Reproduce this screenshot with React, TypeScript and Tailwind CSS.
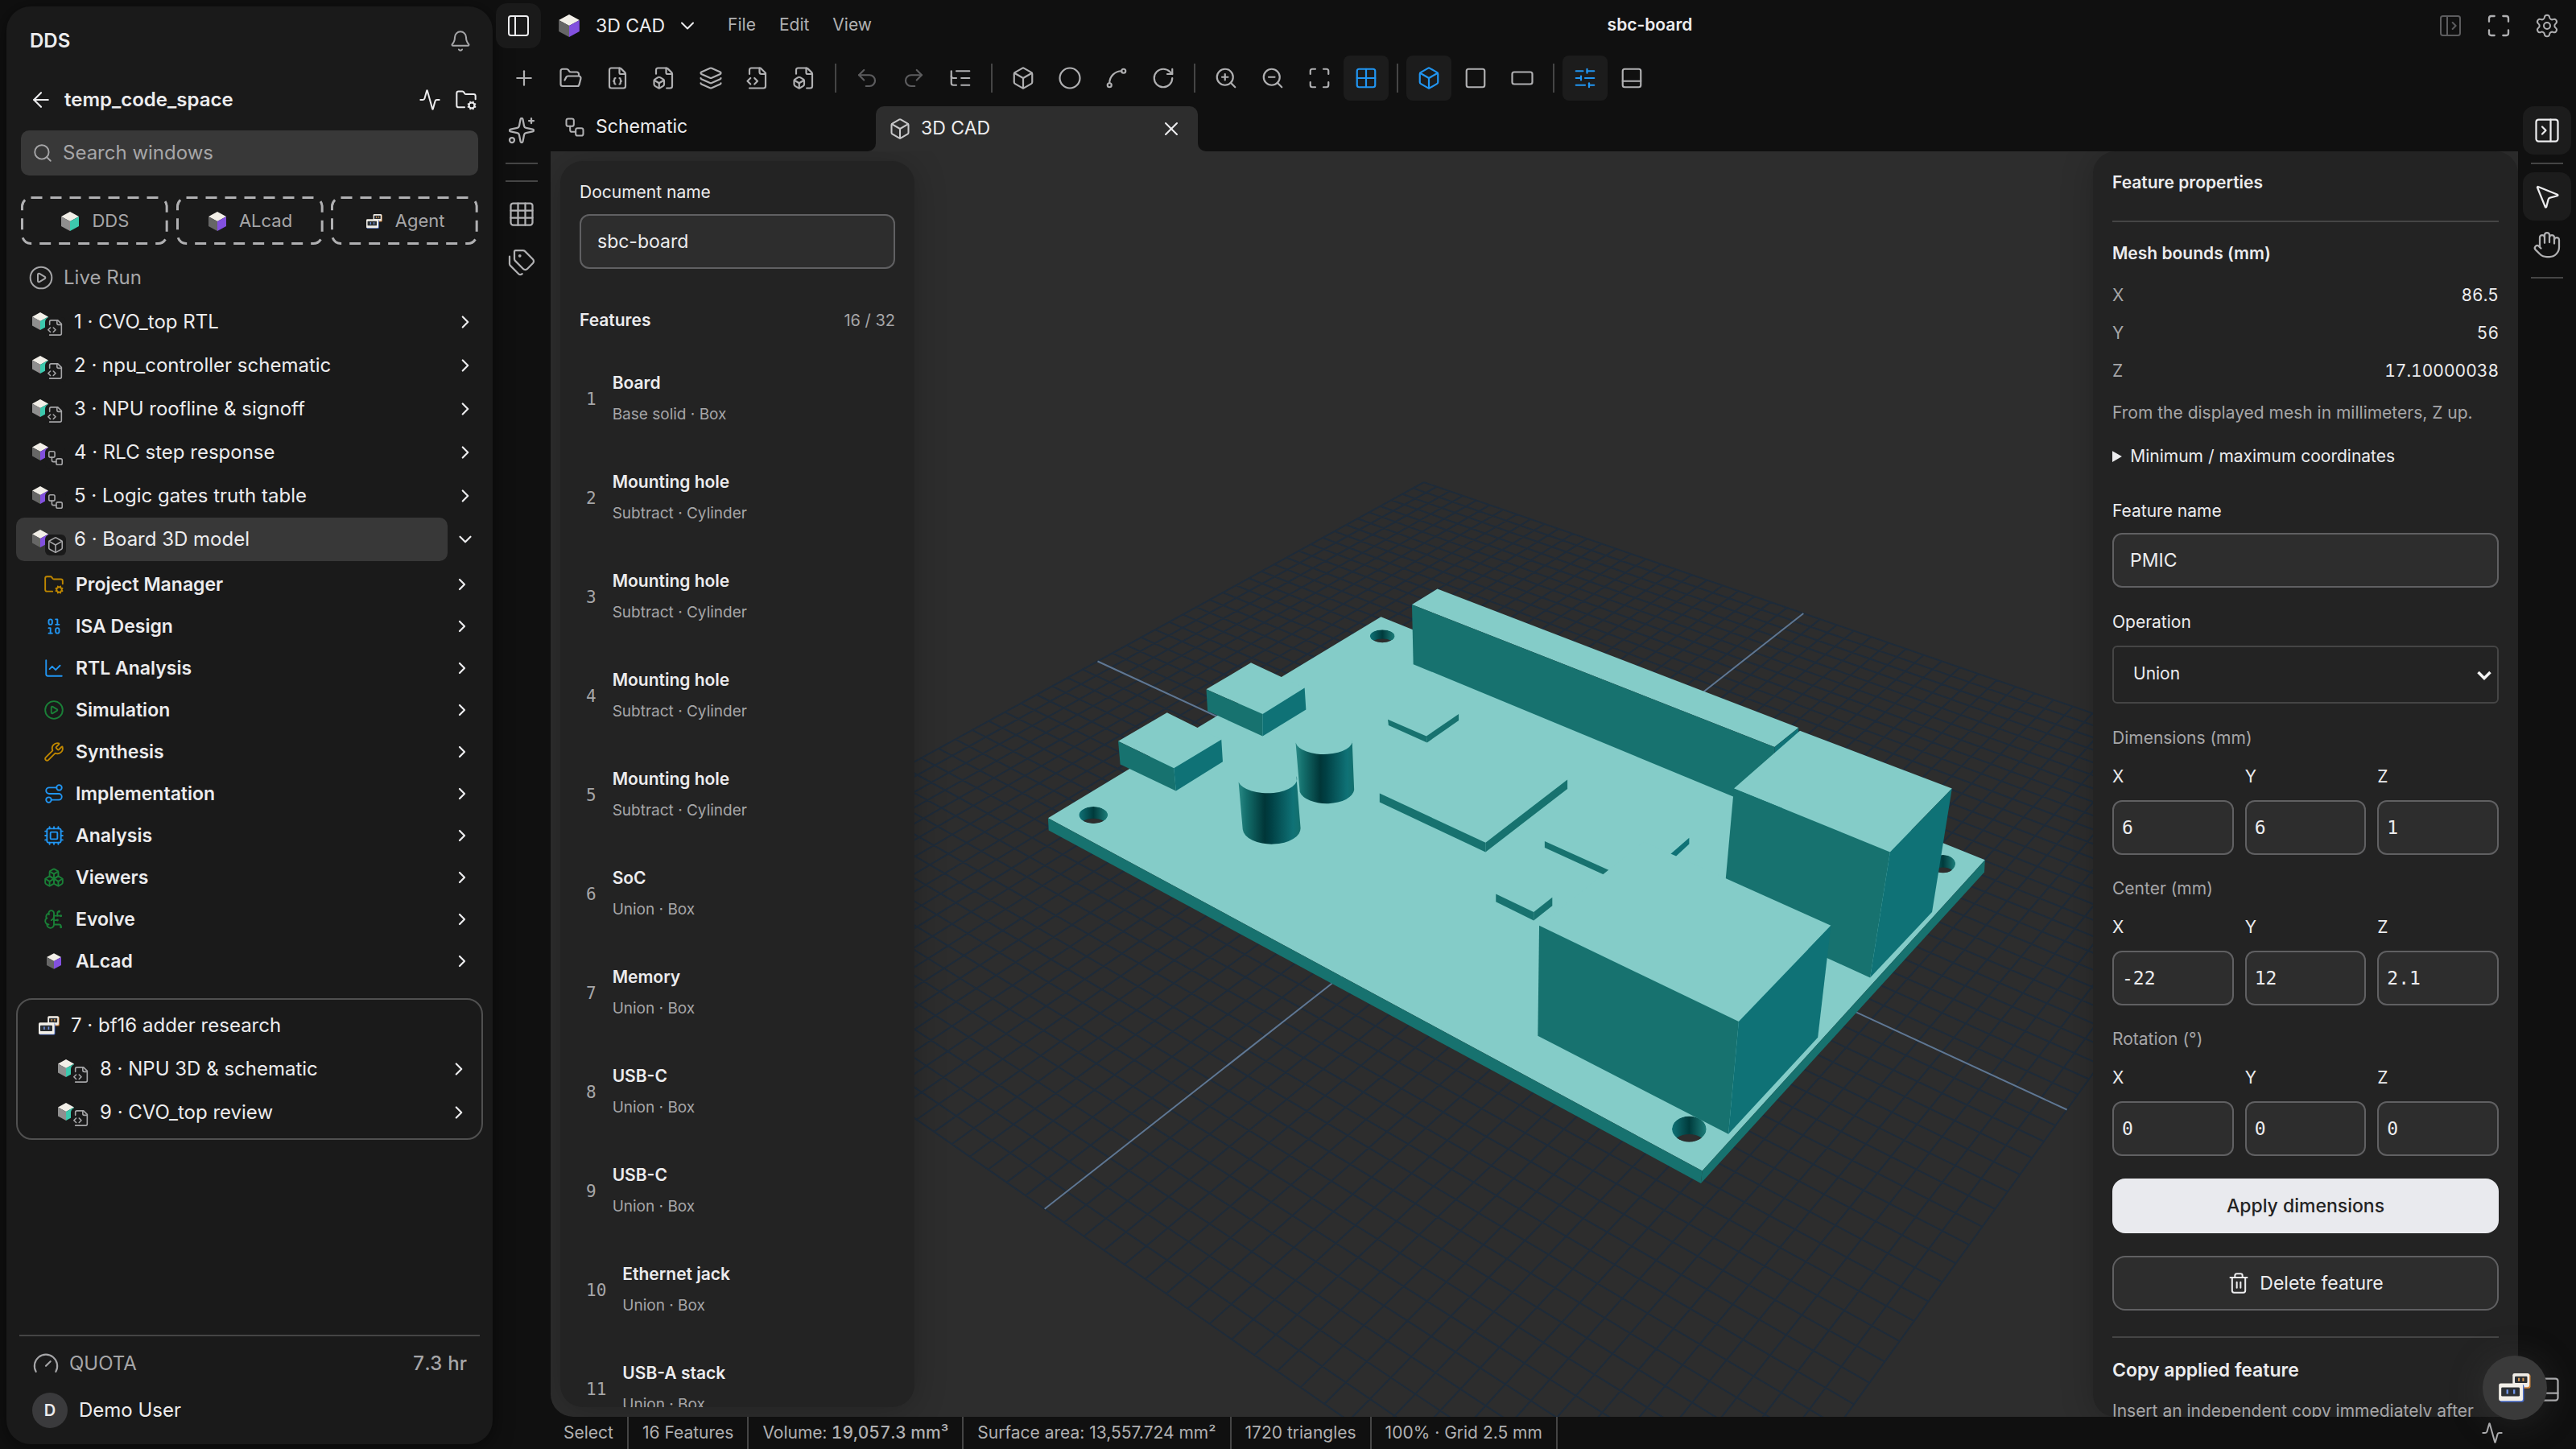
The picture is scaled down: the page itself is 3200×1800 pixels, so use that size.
import React from "react";
import {
  Activity, ArrowLeft, Bell, Binary, Box, Boxes, BrainCircuit, ChartLine, ChevronDown, ChevronRight,
  Circle, CirclePlay, Cpu, FileBox, FileJson, FolderCog, FolderOpen, Gauge, Grid2x2, Grid3x3,
  Hand, Layers, ListTree, Maximize, MousePointer2, PanelBottom, PanelLeft, PanelLeftOpen, PanelRightClose,
  Plus, RectangleHorizontal, Redo2, RotateCw, Route, Search, Settings, SlidersHorizontal, Sparkles, Spline,
  Square, Tags, Trash2, Undo2, Workflow, Wrench, X, ZoomIn, ZoomOut,
} from "lucide-react";

type IconType = React.ComponentType<{ size?: number; strokeWidth?: number; className?: string }>;

function CodeFile({ size = 24, strokeWidth = 2, className }: { size?: number; strokeWidth?: number; className?: string }) {
  return (
    <svg width={size} height={size} viewBox="0 0 24 24" fill="none" stroke="currentColor" strokeWidth={strokeWidth}
      strokeLinecap="round" strokeLinejoin="round" className={className} aria-hidden="true">
      <path d="M4 22h14a2 2 0 0 0 2-2V7l-5-5H6a2 2 0 0 0-2 2v4" />
      <path d="M14 2v4a2 2 0 0 0 2 2h4" />
      <path d="m5 12-3 3 3 3" />
      <path d="m9 18 3-3-3-3" />
    </svg>
  );
}

function Cube({ kind, className }: { kind: "teal" | "violet"; className?: string }) {
  const left = kind === "teal" ? "#8f8f8f" : "#666666";
  const right = kind === "teal" ? "#3cc9ae" : "#8250df";
  return (
    <svg viewBox="0 0 22 24" className={className} aria-hidden="true">
      <path d="M11 0 22 6 11 12 0 6Z" fill="#f2efe8" />
      <path d="M0 6 11 12V24L0 18Z" fill={left} />
      <path d="M22 6 11 12V24L22 18Z" fill={right} />
    </svg>
  );
}

function Robots({ className }: { className?: string }) {
  return (
    <svg viewBox="0 0 118 107" className={className} aria-hidden="true">
      <rect x="54" y="3" width="63" height="53" rx="7" fill="#cf8136" />
      <rect x="51" y="0" width="62" height="51" rx="7" fill="#efece6" />
      <rect x="59" y="11" width="46" height="25" rx="3" fill="#2b2f33" />
      <rect x="71" y="17" width="6" height="12" fill="#e09a4e" />
      <rect x="87" y="17" width="6" height="12" fill="#e09a4e" />
      <rect x="3" y="41" width="90" height="65" rx="7" fill="#4468c8" />
      <rect x="0" y="37" width="89" height="65" rx="7" fill="#f2efe8" />
      <rect x="9" y="52" width="68" height="33" rx="4" fill="#2b2f33" />
      <rect x="28" y="60" width="7" height="16" fill="#6f95e8" />
      <rect x="53" y="60" width="7" height="16" fill="#6f95e8" />
    </svg>
  );
}

/* ---------- Sidebar ---------- */

type WindowItem = { label: string; kind: "teal" | "violet"; icon: IconType; active?: boolean };

const windows: WindowItem[] = [
  { label: "1 · CVO_top RTL", kind: "teal", icon: CodeFile },
  { label: "2 · npu_controller schematic", kind: "teal", icon: CodeFile },
  { label: "3 · NPU roofline & signoff", kind: "teal", icon: CodeFile },
  { label: "4 · RLC step response", kind: "violet", icon: Workflow },
  { label: "5 · Logic gates truth table", kind: "violet", icon: Workflow },
  { label: "6 · Board 3D model", kind: "violet", icon: Box, active: true },
];

const tree: { label: string; icon?: IconType; color: string }[] = [
  { label: "Project Manager", icon: FolderCog, color: "text-[#bf8700]" },
  { label: "ISA Design", icon: Binary, color: "text-[#2196f3]" },
  { label: "RTL Analysis", icon: ChartLine, color: "text-[#2196f3]" },
  { label: "Simulation", icon: CirclePlay, color: "text-[#1a7f37]" },
  { label: "Synthesis", icon: Wrench, color: "text-[#bf8700]" },
  { label: "Implementation", icon: Route, color: "text-[#2196f3]" },
  { label: "Analysis", icon: Cpu, color: "text-[#2196f3]" },
  { label: "Viewers", icon: Boxes, color: "text-[#1a7f37]" },
  { label: "Evolve", icon: BrainCircuit, color: "text-[#1a7f37]" },
  { label: "ALcad", color: "" },
];

const research: WindowItem[] = [
  { label: "8 · NPU 3D & schematic", kind: "teal", icon: CodeFile },
  { label: "9 · CVO_top review", kind: "teal", icon: CodeFile },
];

function WindowIcon({ kind, icon: Icon }: { kind: "teal" | "violet"; icon: IconType }) {
  return (
    <span className="relative h-7 w-10 shrink-0">
      <Cube kind={kind} className="absolute top-0.5 left-0 h-[22px] w-5" />
      <span className="absolute top-2 left-4 flex h-[26px] w-[26px] items-center justify-center rounded-md bg-[#1a1a1a] text-[#a6a6a8]">
        <Icon size={22} strokeWidth={1.75} />
      </span>
    </span>
  );
}

function NewWindowButton({ label, children }: { label: string; children: React.ReactNode }) {
  return (
    <button className="relative flex h-[60px] flex-1 items-center justify-center gap-4 pt-px pl-0.5 text-[22px] text-[#a6a6a8]">
      <svg className="absolute inset-0 h-full w-full overflow-visible" aria-hidden="true">
        <rect x="1.5" y="1.5" rx="11" fill="none" stroke="#b0b0b2" strokeWidth="3" strokeDasharray="14 10"
          className="h-[57px] w-[calc(100%-3px)]" />
      </svg>
      {children}
      {label}
    </button>
  );
}

function Sidebar() {
  return (
    <aside className="m-2 mb-1.5 flex w-[604px] shrink-0 flex-col rounded-[30px] bg-[#1a1a1a] shadow-[0_4px_24px_rgba(0,0,0,0.5)]">
      <div className="flex h-[86px] items-center justify-between pr-[26px] pl-[29px]">
        <h1 className="font-semibold">DDS</h1>
        <button aria-label="Notifications" className="text-[#a6a6a8]"><Bell size={28} strokeWidth={1.75} /></button>
      </div>
      <div className="flex h-[60px] items-center pr-[19px] pl-7">
        <button aria-label="Back"><ArrowLeft size={30} strokeWidth={1.75} /></button>
        <h2 className="ml-3.5 flex-1 font-semibold">temp_code_space</h2>
        <button aria-label="Activity"><Activity size={28} strokeWidth={1.75} /></button>
        <button aria-label="Project settings" className="ml-[17px]"><FolderCog size={28} strokeWidth={1.75} /></button>
      </div>
      <label className="mx-[18px] mt-2 flex h-14 items-center gap-3 rounded-[10px] bg-[#383838] px-3.5 text-[#a6a6a8]">
        <Search size={26} strokeWidth={1.75} className="shrink-0" />
        <input aria-label="Search windows" placeholder="Search windows" className="w-full bg-transparent outline-none placeholder:text-[#a6a6a8]" />
      </label>
      <div className="mx-[18px] mt-[26px] flex gap-2.5">
        <NewWindowButton label="DDS"><Cube kind="teal" className="h-6 w-[22px]" /></NewWindowButton>
        <NewWindowButton label="ALcad"><Cube kind="violet" className="h-6 w-[22px]" /></NewWindowButton>
        <NewWindowButton label="Agent"><Robots className="h-[18px] w-5" /></NewWindowButton>
      </div>
      <button className="mt-3.5 flex h-[54px] items-center gap-3 pl-[27px] text-[#a6a6a8]">
        <CirclePlay size={32} strokeWidth={1.5} />
        Live Run
      </button>
      <nav className="mx-3 mt-px">
        {windows.map((w) => (
          <div key={w.label} className="flex h-[54px] items-center">
            <button className={`flex h-full flex-1 items-center gap-3 rounded-[10px] pl-5 text-left ${w.active ? "bg-[#383838]" : ""}`}>
              <WindowIcon kind={w.kind} icon={w.icon} />
              {w.label}
            </button>
            <button aria-label={`Toggle ${w.label}`} className="flex w-11 justify-center">
              {w.active ? <ChevronDown size={26} strokeWidth={2} /> : <ChevronRight size={26} strokeWidth={2} />}
            </button>
          </div>
        ))}
        <div className="mt-[3px]">
          {tree.map(({ label, icon: Icon, color }) => (
            <button key={label} className="flex h-[52px] w-full items-center pr-3.5 pl-[34px] text-left text-[23px] font-semibold">
              <span className={`flex w-[26px] justify-center ${color}`}>
                {Icon ? <Icon size={26} strokeWidth={1.75} /> : <Cube kind="violet" className="h-5 w-[18px]" />}
              </span>
              <span className="ml-3.5 flex-1">{label}</span>
              <ChevronRight size={24} strokeWidth={2.25} />
            </button>
          ))}
        </div>
        <section className="mt-5 rounded-[20px] border-2 border-[#505050] py-[5px]">
          <button className="flex h-[54px] w-full items-center gap-3.5 pl-[26px] text-left">
            <Robots className="h-6 w-[26px]" />
            7 · bf16 adder research
          </button>
          {research.map((w) => (
            <button key={w.label} className="flex h-[54px] w-full items-center gap-3 pr-[15px] pl-[50px] text-left">
              <WindowIcon kind={w.kind} icon={w.icon} />
              <span className="flex-1">{w.label}</span>
              <ChevronRight size={26} strokeWidth={2} />
            </button>
          ))}
        </section>
      </nav>
      <footer className="mx-4 mt-auto border-t-2 border-[#454545] pt-1 pb-3.5">
        <div className="flex h-[60px] items-center gap-3 px-4 text-[#a6a6a8]">
          <Gauge size={34} strokeWidth={1.5} />
          <span className="flex-1">QUOTA</span>
          <span className="font-medium tabular-nums">7.3 hr</span>
        </div>
        <button className="flex h-14 items-center gap-3.5 pl-4">
          <span className="flex h-11 w-11 items-center justify-center rounded-full bg-[#3a3a3c] text-xl font-semibold">D</span>
          Demo User
        </button>
      </footer>
    </aside>
  );
}

/* ---------- Top bars ---------- */

type Tool = { name: string; icon: IconType; state?: "active" | "disabled" };

const toolGroups: Tool[][] = [
  [
    { name: "New", icon: Plus }, { name: "Open", icon: FolderOpen }, { name: "Export JSON", icon: FileJson },
    { name: "Import model", icon: FileBox }, { name: "Layers", icon: Layers }, { name: "Export code", icon: CodeFile },
    { name: "Export model", icon: FileBox },
  ],
  [
    { name: "Undo", icon: Undo2, state: "disabled" }, { name: "Redo", icon: Redo2, state: "disabled" },
    { name: "Feature tree", icon: ListTree },
  ],
  [
    { name: "Box", icon: Box }, { name: "Cylinder", icon: Circle }, { name: "Spline", icon: Spline },
    { name: "Revolve", icon: RotateCw },
  ],
  [
    { name: "Zoom in", icon: ZoomIn }, { name: "Zoom out", icon: ZoomOut }, { name: "Fit", icon: Maximize },
    { name: "Grid", icon: Grid2x2, state: "active" },
  ],
  [
    { name: "Isometric", icon: Box, state: "active" }, { name: "Top", icon: Square },
    { name: "Front", icon: RectangleHorizontal },
  ],
  [{ name: "Properties", icon: SlidersHorizontal, state: "active" }, { name: "Bottom panel", icon: PanelBottom }],
];

function TopBar() {
  return (
    <header className="flex h-16 items-center pr-2 pl-1">
      <button aria-label="Toggle sidebar" className="flex h-14 w-14 items-center justify-center rounded-[14px] bg-[#1a1a1a]">
        <PanelLeft size={32} strokeWidth={1.5} />
      </button>
      <button className="ml-[22px] flex items-center text-[23px]">
        <Cube kind="violet" className="h-7 w-[26px]" />
        <span className="ml-5">3D CAD</span>
        <ChevronDown size={28} strokeWidth={1.75} className="ml-3.5" />
      </button>
      <nav className="ml-9 flex gap-[29px] pb-0.5 text-[21px] text-[#b0b0b2]">
        <button>File</button>
        <button>Edit</button>
        <button>View</button>
      </nav>
      <div className="flex-1 pb-0.5 text-center text-[21px] font-semibold">sbc-board</div>
      <div className="flex gap-1 text-[#b0b0b2]">
        <button aria-label="Open side panel" className="flex h-14 w-14 items-center justify-center text-[#5c5c5e]"><PanelLeftOpen size={32} strokeWidth={1.5} /></button>
        <button aria-label="Full screen" className="flex h-14 w-14 items-center justify-center"><Maximize size={32} strokeWidth={1.75} /></button>
        <button aria-label="Settings" className="flex h-14 w-14 items-center justify-center"><Settings size={32} strokeWidth={1.5} /></button>
      </div>
    </header>
  );
}

function Toolbar() {
  return (
    <div role="toolbar" className="flex h-16 items-center gap-0.5 pt-px pl-[11px] text-[#b0b0b2]">
      {toolGroups.map((group, i) => (
        <React.Fragment key={i}>
          {i > 0 && <span className="mx-2 h-9 w-0.5 bg-[#454545]" />}
          {group.map(({ name, icon: Icon, state }) => (
            <button key={name} aria-label={name} disabled={state === "disabled"}
              className={`flex h-14 w-14 items-center justify-center rounded-lg ${
                state === "active" ? "bg-[#1c1c1c] text-[#2196f3]" : state === "disabled" ? "text-[#5c5c5e]" : ""}`}>
              <Icon size={30} strokeWidth={1.75} />
            </button>
          ))}
        </React.Fragment>
      ))}
    </div>
  );
}

function RailButton({ name, icon: Icon, active }: { name: string; icon: IconType; active?: boolean }) {
  return (
    <button aria-label={name} className={`flex h-[60px] w-[60px] items-center justify-center rounded-[14px] ${active ? "bg-[#1c1c1c] text-[#ececee]" : "text-[#b0b0b2]"}`}>
      <Icon size={36} strokeWidth={1.5} />
    </button>
  );
}

function RailLine() {
  return <span className="my-2.5 h-0.5 w-10 bg-[#454545]" />;
}

function Tabs() {
  return (
    <div className="flex h-14 text-[23px]" role="tablist">
      <button role="tab" aria-selected="false" className="flex w-[404px] items-center gap-3 pb-1 pl-4">
        <Workflow size={28} strokeWidth={1.75} className="text-[#b0b0b2]" />
        <span className="pb-0.5">Schematic</span>
      </button>
      <div className="relative flex w-[400px] items-center rounded-t-[10px] bg-[#2d2d2d] pr-[19px] pl-4">
        <svg viewBox="0 0 10 10" className="absolute bottom-0 -left-2.5 h-2.5 w-2.5" aria-hidden="true"><path d="M10 0V10H0A10 10 0 0 0 10 0Z" fill="#2d2d2d" /></svg>
        <svg viewBox="0 0 10 10" className="absolute -right-2.5 bottom-0 h-2.5 w-2.5" aria-hidden="true"><path d="M0 0V10H10A10 10 0 0 1 0 0Z" fill="#2d2d2d" /></svg>
        <button role="tab" aria-selected="true" className="flex flex-1 items-center gap-3">
          <Box size={28} strokeWidth={1.75} className="text-[#c8c8ca]" />
          <span className="pb-0.5">3D CAD</span>
        </button>
        <button aria-label="Close tab"><X size={28} strokeWidth={1.75} /></button>
      </div>
    </div>
  );
}

/* ---------- 3D view ---------- */

/* Ground plane projection: u and v run from -1 to 1 over a 130 mm square. */
function project(u: number, v: number): string {
  const w = 1 - 0.16298 * u + 0.20878 * v;
  const x = (1183.4 + 393.2 * u + 697.8 * v) / w;
  const y = (866.6 + 129.9 * u - 172.8 * v) / w;
  return `${x.toFixed(1)} ${y.toFixed(1)}`;
}

const DIVISIONS = 52;

function gridPath(): string {
  let d = "";
  for (let i = 0; i <= DIVISIONS; i++) {
    const t = (2 * i) / DIVISIONS - 1;
    d += `M${project(t, -1)}L${project(t, 1)}M${project(-1, t)}L${project(1, t)}`;
  }
  return d;
}

const TOP = "#84ccc8";
const FRONT = "#17726f";
const SIDE = "#0f7276";

const solids: [string, string][] = [
  ["1142,568 1363,685 1273,814 1046,685", TOP],
  ["1046,685 1273,814 1244,1069 1030,932", FRONT],
  ["1273,814 1363,685 1334,936 1244,1069", SIDE],
  ["771,792 871,855 871,869 771,805", FRONT],
  ["940,835 981,785 981,798 940,851", SIDE],
  ["915,793 1187,963 1053,1158 763,963", TOP],
  ["763,963 1053,1158 1038,1386 761,1187", FRONT],
  ["1053,1158 1187,963 1168,1190 1038,1386", SIDE],
  ["344,430 422,481 361,534 279,484", TOP],
  ["279,484 361,534 361,579 281,528", FRONT],
  ["361,534 422,481 424,525 361,579", SIDE],
  ["222,531 301,586 232,644 151,589", TOP],
  ["151,589 232,644 235,690 154,636", FRONT],
  ["232,644 301,586 303,631 235,690", SIDE],
  ["543,545 599,579 600,592 544,557", FRONT],
  ["599,579 646,534 646,547 600,592", FRONT],
  ["531,695 685,795 685,814 531,713", FRONT],
  ["685,795 804,667 804,686 685,814", FRONT],
  ["700,899 755,936 755,953 700,915", FRONT],
  ["755,936 782,906 782,923 755,953", FRONT],
];

const holes = [
  { cx: 535, cy: 376, rx: 18, ry: 13 },
  { cx: 115, cy: 739, rx: 21, ry: 17 },
  { cx: 1350, cy: 838, rx: 18, ry: 18 },
  { cx: 981, cy: 1376, rx: 25, ry: 26 },
];

function Scene() {
  return (
    <svg viewBox="0 0 2444 1572" preserveAspectRatio="xMidYMid slice" className="absolute inset-0 h-full w-full" role="img" aria-label="3D model of sbc-board">
      <defs>
        <linearGradient id="barrel">
          <stop offset="0" stopColor="#2a8a86" />
          <stop offset="0.12" stopColor="#14706d" />
          <stop offset="0.42" stopColor="#003638" />
          <stop offset="0.52" stopColor="#004044" />
          <stop offset="0.88" stopColor="#0f7276" />
          <stop offset="1" stopColor="#14706d" />
        </linearGradient>
        <linearGradient id="bore">
          <stop offset="0" stopColor="#0f7276" />
          <stop offset="0.5" stopColor="#003b3c" />
          <stop offset="1" stopColor="#1d7f7b" />
        </linearGradient>
        {holes.map((h, i) => (
          <clipPath key={i} id={`hole${i}`}><ellipse cx={h.cx} cy={h.cy} rx={h.rx} ry={h.ry} /></clipPath>
        ))}
      </defs>
      <path d={gridPath()} fill="none" stroke="#1e2b39" strokeWidth="2" />
      <path d={`M${project(-1, 0)}L${project(1, 0)}M${project(0, -1)}L${project(0, 1)}`} fill="none" stroke="#607792" strokeWidth="2" />
      <g transform="translate(576 372) scale(0.8546 0.6123)">
        <polygon points="533,337 1411,830 1000,1461 49,745" fill={TOP} />
        <polygon points="49,745 1000,1461 998,1486 50,770" fill={FRONT} />
        <polygon points="1000,1461 1411,830 1410,855 998,1486" fill={FRONT} />
        {holes.map((h, i) => (
          <g key={i} clipPath={`url(#hole${i})`}>
            <ellipse cx={h.cx} cy={h.cy} rx={h.rx} ry={h.ry} fill="url(#bore)" />
            <ellipse cx={h.cx} cy={h.cy + h.ry * 1.4} rx={h.rx} ry={h.ry} fill="#2d2d2d" />
          </g>
        ))}
        <polygon points="615,280 1140,562 1105,601 578,312" fill={TOP} />
        <polygon points="578,312 1105,601 1105,736 580,433" fill={FRONT} />
        <polygon points="1105,601 1140,562 1140,700 1105,736" fill={SIDE} />
        {solids.map(([points, fill]) => <polygon key={points} points={points} fill={fill} />)}
        <path d="M409 592A41 27 0 0 0 491 585L494 688A40 30 0 0 1 415 692Z" fill="url(#barrel)" />
        <path d="M326 672A42 28 0 0 0 410 660L416 764A42 32 0 0 1 332 768Z" fill="url(#barrel)" />
      </g>
    </svg>
  );
}

/* ---------- Panels ---------- */

const features: [string, string][] = [
  ["Board", "Base solid · Box"],
  ["Mounting hole", "Subtract · Cylinder"],
  ["Mounting hole", "Subtract · Cylinder"],
  ["Mounting hole", "Subtract · Cylinder"],
  ["Mounting hole", "Subtract · Cylinder"],
  ["SoC", "Union · Box"],
  ["Memory", "Union · Box"],
  ["USB-C", "Union · Box"],
  ["USB-C", "Union · Box"],
  ["Ethernet jack", "Union · Box"],
  ["USB-A stack", "Union · Box"],
];

const panelShadow = "shadow-[0_4px_40px_rgba(0,0,0,0.22)]";

function FeatureList() {
  return (
    <section className={`relative m-3 flex w-[440px] flex-col overflow-hidden rounded-[28px] bg-[#232323] px-6 pt-[23px] text-[21px] ${panelShadow}`}>
      <label htmlFor="document-name" className="leading-8">Document name</label>
      <input id="document-name" defaultValue="sbc-board" className="mt-[11px] h-[68px] w-full shrink-0 rounded-xl border-2 border-[#606062] bg-[#2d2d2d] px-5 text-[23px] outline-none" />
      <div className="mt-12 flex items-center justify-between leading-8">
        <h2 className="font-semibold">Features</h2>
        <span className="text-xl text-[#a6a6a8]">16 / 32</span>
      </div>
      <ol className="mt-5">
        {features.map(([title, detail], i) => (
          <li key={i}>
            <button className="flex h-[123px] w-full items-center gap-5 pl-2 text-left">
              <span className="font-['DejaVu_Sans_Mono',monospace] text-[#a6a6a8]">{i + 1}</span>
              <span>
                <span className="block leading-[38px] font-semibold">{title}</span>
                <span className="block text-[19px] leading-10 text-[#a6a6a8]">{detail}</span>
              </span>
            </button>
          </li>
        ))}
      </ol>
    </section>
  );
}

const bounds = [["X", "86.5"], ["Y", "56"], ["Z", "17.10000038"]];
const vectors: [string, string[]][] = [
  ["Dimensions (mm)", ["6", "6", "1"]],
  ["Center (mm)", ["-22", "12", "2.1"]],
  ["Rotation (°)", ["0", "0", "0"]],
];

function Properties() {
  return (
    <section className={`relative flex w-[528px] flex-col overflow-hidden rounded-[28px] bg-[#232323] px-6 pt-[23px] text-[21px] leading-8 ${panelShadow}`}>
      <h2 className="font-semibold">Feature properties</h2>
      <hr className="mt-[31px] border-t-2 border-[#454545]" />
      <h3 className="mt-[23px] font-semibold">Mesh bounds (mm)</h3>
      <dl className="mt-3">
        {bounds.map(([axis, value]) => (
          <div key={axis} className="flex h-[47px] items-center justify-between">
            <dt className="text-[#a6a6a8]">{axis}</dt>
            <dd className="tabular-nums">{value}</dd>
          </div>
        ))}
      </dl>
      <p className="mt-[13px] text-[#a6a6a8]">From the displayed mesh in millimeters, Z up.</p>
      <details className="mt-[22px]">
        <summary>Minimum / maximum coordinates</summary>
      </details>
      <label htmlFor="feature-name" className="mt-9">Feature name</label>
      <input id="feature-name" defaultValue="PMIC" className="mt-[11px] h-[68px] w-full shrink-0 rounded-xl border-2 border-[#606062] bg-[#2d2d2d] px-5 text-[23px] outline-none" />
      <label htmlFor="operation" className="mt-[27px]">Operation</label>
      <div className="relative mt-[13px] shrink-0">
        <select id="operation" defaultValue="Union" className="h-[72px] w-full appearance-none rounded-md border-2 border-[#454545] bg-[#232323] px-6 pb-0.5 outline-none">
          <option>Union</option>
          <option>Subtract</option>
        </select>
        <svg viewBox="0 0 18 12" className="pointer-events-none absolute top-[31px] right-[9px] h-3 w-[18px]" aria-hidden="true"><path d="M1.500 2 9 9.500 16.500 2" fill="none" stroke="#f4f4f4" strokeWidth="3.5" /></svg>
      </div>
      <div className="mt-[27px] flex shrink-0 flex-col gap-[26px]">
        {vectors.map(([name, values]) => (
          <fieldset key={name}>
            <legend className="text-[#a6a6a8]">{name}</legend>
            <div className="mt-4 grid grid-cols-3 gap-3.5">
              {values.map((value, i) => (
                <label key={i} className="flex flex-col gap-[13px]">
                  {"XYZ"[i]}
                  <input defaultValue={value} inputMode="decimal" className="h-[68px] w-full rounded-xl border-2 border-[#606062] bg-[#2d2d2d] px-2.5 font-['DejaVu_Sans_Mono',monospace] text-[23px] outline-none" />
                </label>
              ))}
            </div>
          </fieldset>
        ))}
      </div>
      <button className="mt-7 h-[68px] shrink-0 rounded-2xl bg-[#e9eaee] text-[23px] font-medium text-[#232323]">Apply dimensions</button>
      <button className="mt-7 flex h-[68px] shrink-0 items-center justify-center gap-3 rounded-2xl border-2 border-[#606062] bg-[#2d2d2d] text-[23px]">
        <Trash2 size={28} strokeWidth={1.75} />
        Delete feature
      </button>
      <hr className="mt-8 border-t-2 border-[#454545]" />
      <h3 className="mt-6 text-[23px] font-semibold">Copy applied feature</h3>
      <p className="mt-[19px] whitespace-nowrap text-[#a6a6a8]">Insert an independent copy immediately after</p>
    </section>
  );
}

function StatusBar() {
  const cell = "flex items-center border-r-2 border-[#454545] px-[17px]";
  return (
    <footer className="flex h-10 pl-[71px] text-[21px] text-[#b0b0b2]">
      <span className={cell}>Select</span>
      <span className={cell}>16 Features</span>
      <span className={`${cell} tabular-nums`}>Volume:&nbsp;<strong className="font-medium">19,057.3 mm³</strong></span>
      <span className={cell}>Surface area: 13,557.724 mm²</span>
      <span className={cell}>1720 triangles</span>
      <span className={cell}>100% · Grid 2.5 mm</span>
      <button aria-label="Session activity" className="mr-[90px] ml-auto"><Activity size={28} strokeWidth={1.75} /></button>
    </footer>
  );
}

export default function App() {
  return (
    <div className="relative flex h-screen overflow-hidden bg-[#101010] font-[Inter,sans-serif] text-2xl text-[#ececee]">
      <Sidebar />
      <main className="-ml-2 flex min-w-0 flex-1 flex-col">
        <TopBar />
        <Toolbar />
        <div className="flex min-h-0 flex-1 pt-1">
          <div className="flex w-[72px] shrink-0 flex-col items-center">
            <RailButton name="Assistant" icon={Sparkles} />
            <RailLine />
            <RailLine />
            <RailButton name="Grid" icon={Grid3x3} />
            <RailButton name="Tags" icon={Tags} />
          </div>
          <div className="flex min-w-0 flex-1 flex-col">
            <Tabs />
            <div className="relative flex min-h-0 flex-1 justify-between overflow-hidden rounded-bl-[28px] bg-[#2d2d2d]">
              <Scene />
              <FeatureList />
              <Properties />
            </div>
          </div>
          <div className="flex w-[72px] shrink-0 flex-col items-center">
            <RailButton name="Collapse panel" icon={PanelRightClose} active />
            <RailLine />
            <RailButton name="Select" icon={MousePointer2} active />
            <RailButton name="Pan" icon={Hand} />
            <RailLine />
            <div className="mt-auto mb-1"><RailButton name="Bottom panel" icon={PanelBottom} /></div>
          </div>
        </div>
        <StatusBar />
      </main>
      <button aria-label="Agents" className="absolute right-9 bottom-9 flex h-20 w-20 items-center justify-center rounded-full bg-[#3a3a3a] shadow-[0_4px_40px_rgba(70,70,70,0.35)]">
        <Robots className="h-9 w-10" />
      </button>
    </div>
  );
}
